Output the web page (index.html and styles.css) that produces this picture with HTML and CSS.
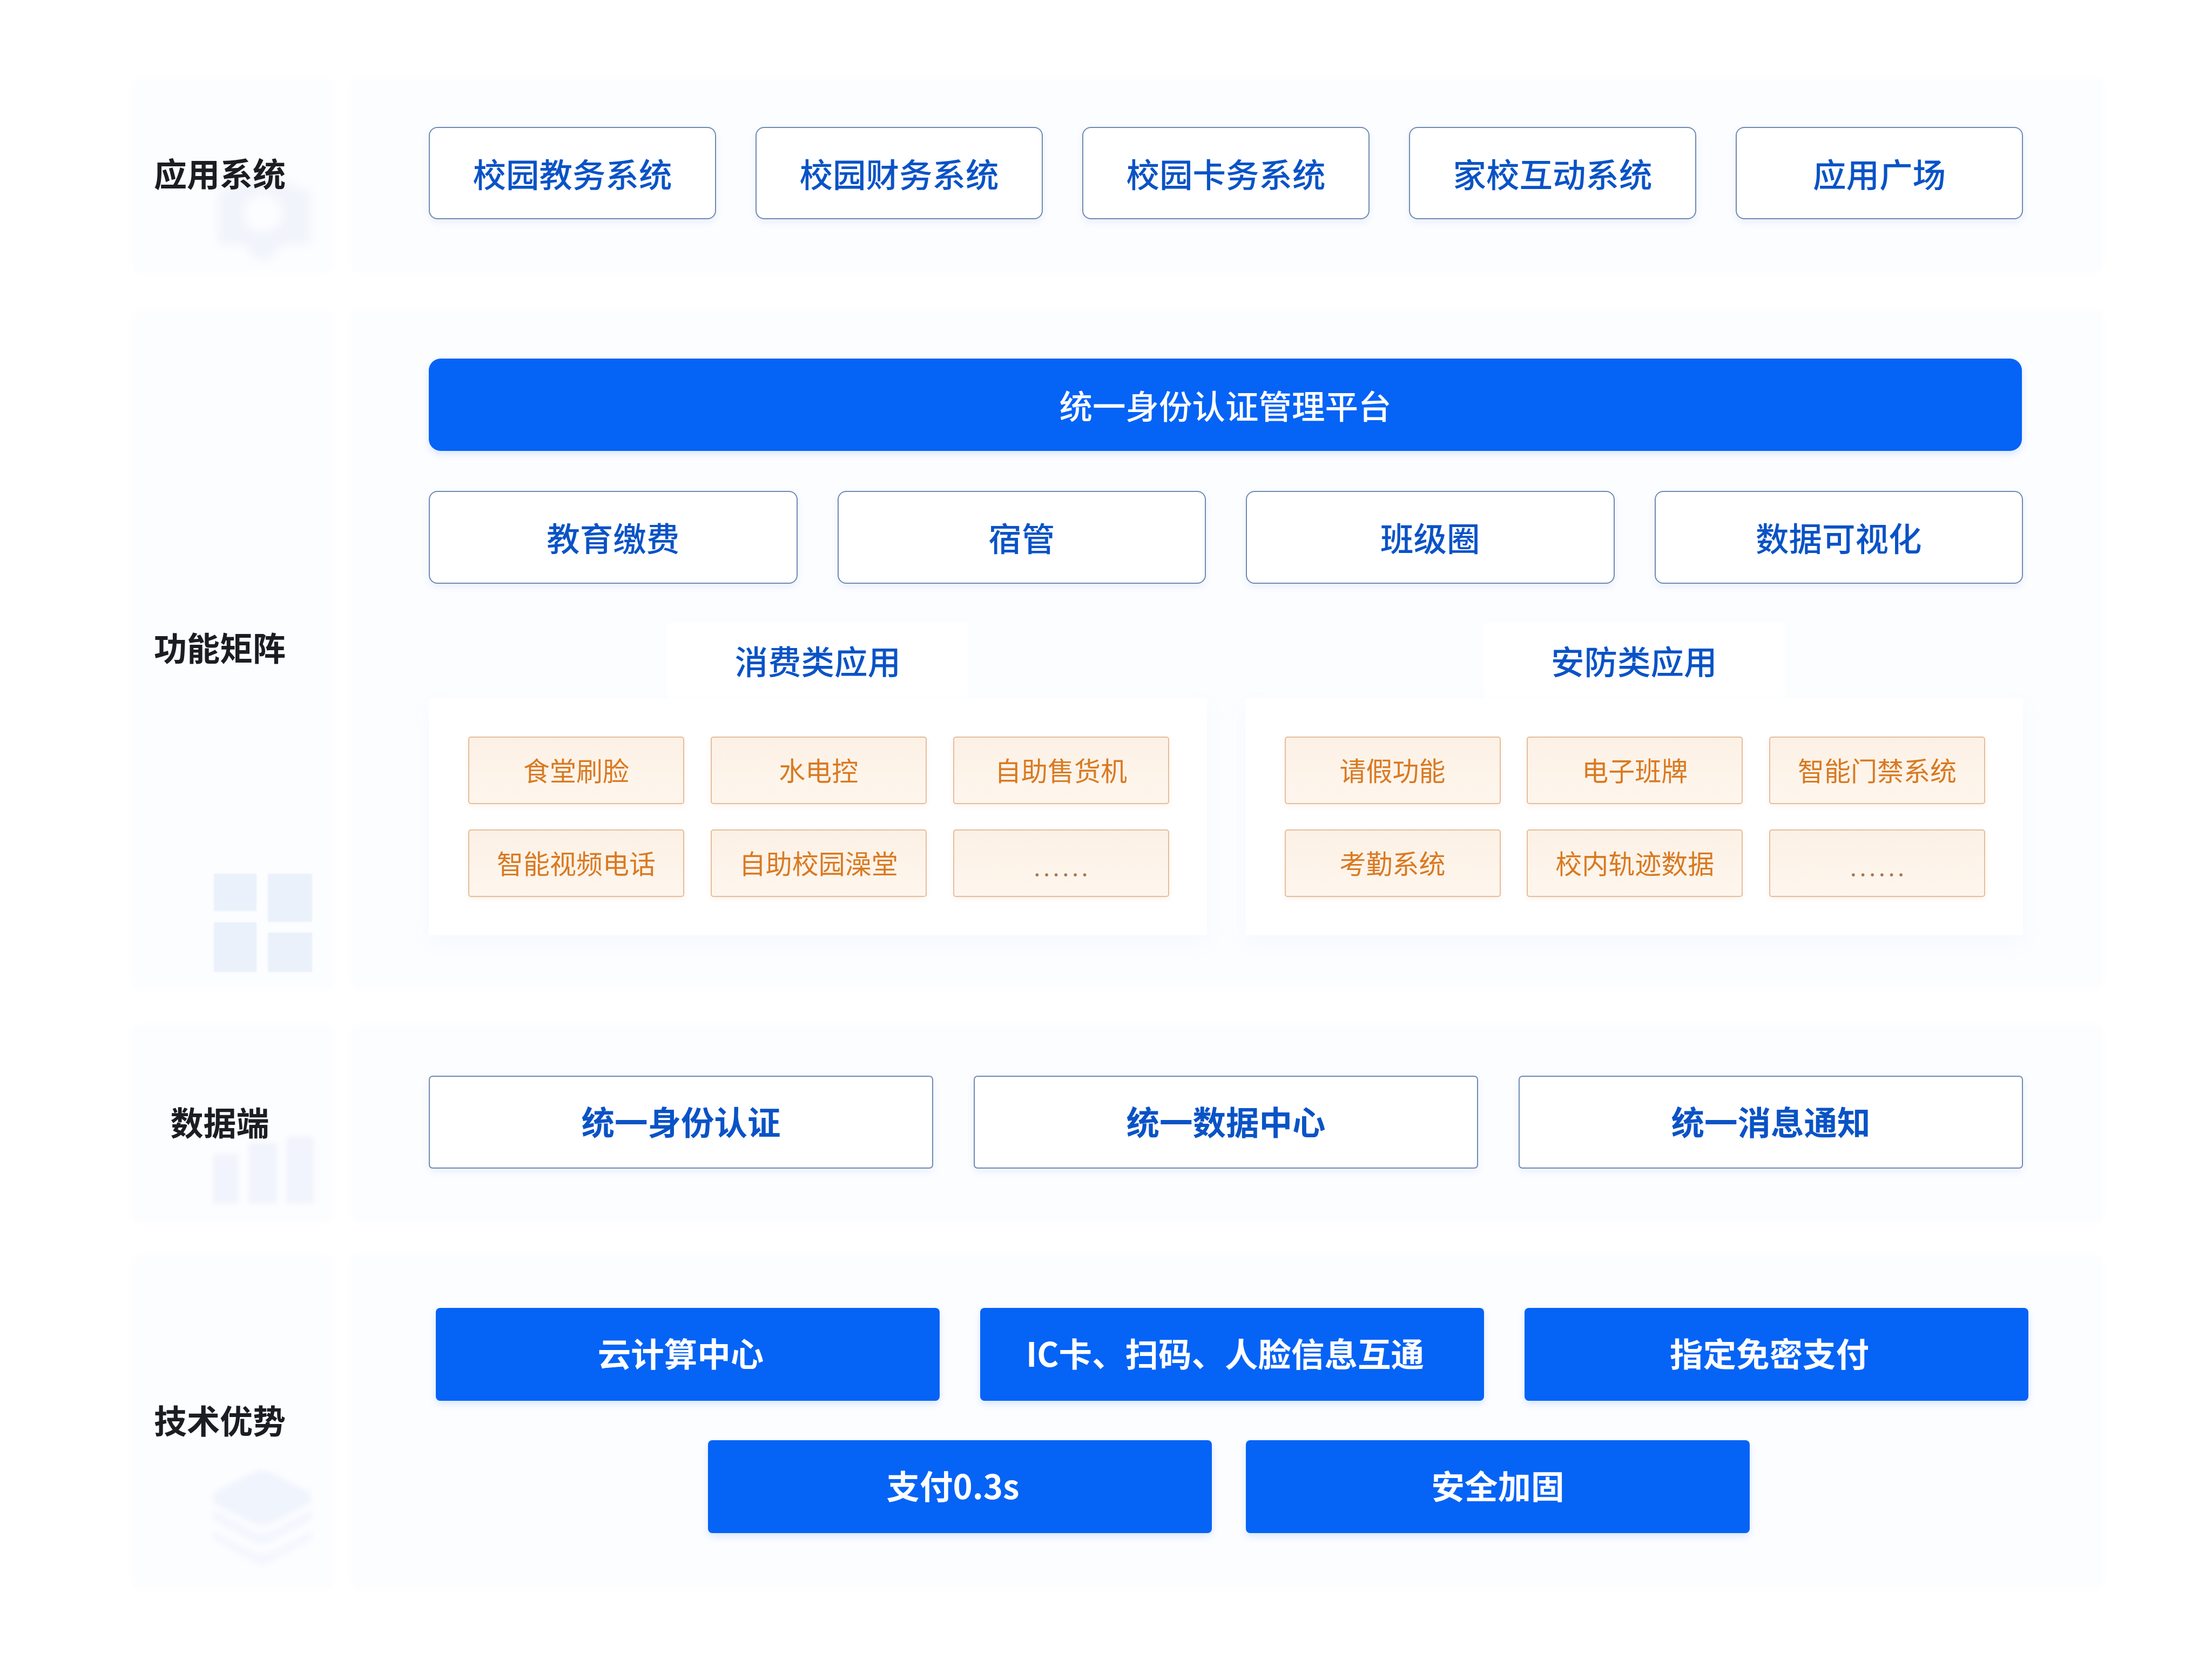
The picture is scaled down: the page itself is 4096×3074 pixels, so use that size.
FILE: index.html
```html
<!DOCTYPE html>
<html lang="zh-CN">
<head>
<meta charset="utf-8">
<title>智慧校园架构</title>
<link rel="stylesheet" href="styles.css">
</head>
<body>
<main class="page">
  <section class="row row-apps">
    <div class="side">
      <h2 class="label">应用系统</h2>
      <svg class="mark mark-gear" viewBox="0 0 175 132"><path fill-rule="evenodd" d="M87 -30 L175 5 V100 L118 105 Q105 132 85 130 Q65 130 58 105 L4 100 V5 Z M87 10 A36 34 0 1 0 87.1 78 A36 34 0 1 0 87 10 Z"/></svg>
    </div>
    <div class="main">
      <div class="grid five">
        <div class="box">校园教务系统</div>
        <div class="box">校园财务系统</div>
        <div class="box">校园卡务系统</div>
        <div class="box">家校互动系统</div>
        <div class="box">应用广场</div>
      </div>
    </div>
  </section>

  <section class="row row-func">
    <div class="side">
      <h2 class="label">功能矩阵</h2>
      <svg class="mark mark-win" viewBox="0 0 182 182"><rect x="0" y="0" width="79" height="69"/><rect x="100" y="0" width="82" height="89"/><rect x="0" y="90" width="79" height="92"/><rect x="100" y="109" width="82" height="73"/></svg>
    </div>
    <div class="main">
      <div class="solid solid-top">统一身份认证管理平台</div>
      <div class="grid four">
        <div class="box box-four">教育缴费</div>
        <div class="box box-four">宿管</div>
        <div class="box box-four">班级圈</div>
        <div class="box box-four">数据可视化</div>
      </div>
      <div class="grid two">
        <div class="group">
          <h3 class="tab">消费类应用</h3>
          <div class="panel">
            <div class="chip">食堂刷脸</div>
            <div class="chip">水电控</div>
            <div class="chip">自助售货机</div>
            <div class="chip">智能视频电话</div>
            <div class="chip">自助校园澡堂</div>
            <div class="chip dots">......</div>
          </div>
        </div>
        <div class="group">
          <h3 class="tab">安防类应用</h3>
          <div class="panel">
            <div class="chip">请假功能</div>
            <div class="chip">电子班牌</div>
            <div class="chip">智能门禁系统</div>
            <div class="chip">考勤系统</div>
            <div class="chip">校内轨迹数据</div>
            <div class="chip dots">......</div>
          </div>
        </div>
      </div>
    </div>
  </section>

  <section class="row row-data">
    <div class="side">
      <h2 class="label">数据端</h2>
      <svg class="mark mark-bars" viewBox="0 0 187 124"><rect x="0" y="32" width="48" height="92"/><rect x="66" y="11" width="53" height="113"/><rect x="136" y="0" width="51" height="124"/></svg>
    </div>
    <div class="main">
      <div class="grid three">
        <div class="box box-data">统一身份认证</div>
        <div class="box box-data">统一数据中心</div>
        <div class="box box-data">统一消息通知</div>
      </div>
    </div>
  </section>

  <section class="row row-tech">
    <div class="side">
      <h2 class="label">技术优势</h2>
      <svg class="mark mark-stack" viewBox="0 0 191 177"><path d="M95 0 Q105 0 120 8 L182 40 Q191 50 182 62 L112 98 Q95 106 78 98 L8 62 Q0 50 8 40 L70 8 Q85 0 95 0 Z"/><path opacity=".75" d="M4 72 L78 112 Q95 120 112 112 L187 72 L187 92 L112 132 Q95 140 78 132 L4 92 Z"/><path opacity=".6" d="M4 112 L78 150 Q95 158 112 150 L187 112 L187 128 L112 170 Q95 180 78 170 L4 128 Z"/></svg>
    </div>
    <div class="main main-tech">
      <div class="grid tech-a">
        <div class="solid solid-shift">云计算中心</div>
        <div class="solid solid-shift">IC卡、扫码、人脸信息互通</div>
        <div class="solid solid-shift">指定免密支付</div>
      </div>
      <div class="grid tech-b">
        <div class="solid solid-shift">支付0.3s</div>
        <div class="solid solid-up">安全加固</div>
      </div>
    </div>
  </section>
</main>
</body>
</html>
```

FILE: styles.css
```css
html, body {
  margin: 0;
  padding: 0;
  background: #ffffff;
}

body {
  width: 4096px;
  height: 3074px;
  overflow: hidden;
  font-family: "Noto Sans CJK SC", "Noto Sans", sans-serif;
}

h2, h3 {
  margin: 0;
  font: inherit;
}

.page {
  display: flex;
  flex-direction: column;
  padding: 147px 204px 0 248px;
}

.row {
  display: grid;
  grid-template-columns: 366px 3239px;
  column-gap: 39px;
}

.row-apps { margin-bottom: 74px; }
.row-func { margin-bottom: 71px; }
.row-data { margin-bottom: 65px; }

.side, .main {
  background: #fcfdff;
  box-shadow: 0 0 36px 10px #fefeff;
}

.side {
  position: relative;
  display: flex;
  align-items: center;
  padding-left: 37px;
  padding-bottom: 10px;
  box-sizing: border-box;
}

.main {
  display: flex;
  flex-direction: column;
  padding: 0 146px 0 141px;
}

.label {
  position: relative;
  z-index: 1;
  width: 244px;
  font-size: 61px;
  line-height: 1;
  font-weight: 700;
  text-align: center;
  white-space: nowrap;
  color: #1b1d22;
}

.mark {
  position: absolute;
  overflow: visible;
}

.mark-gear {
  right: 39px;
  bottom: 19px;
  width: 175px;
  height: 132px;
  fill: #f1f4fb;
  filter: blur(8px);
}

.mark-win {
  right: 36px;
  bottom: 29px;
  width: 182px;
  height: 182px;
  fill: #ebf1fb;
  filter: blur(1px);
}

.mark-bars {
  right: 33px;
  bottom: 33px;
  width: 187px;
  height: 124px;
  fill: #f1f4fc;
  filter: blur(4px);
}

.mark-stack {
  right: 33px;
  bottom: 40px;
  width: 191px;
  height: 177px;
  fill: #f0f4fd;
  filter: blur(5px);
}

.grid {
  display: grid;
}

.five {
  grid-template-columns: repeat(5, 1fr);
  column-gap: 73px;
}

.four {
  grid-template-columns: repeat(4, 1fr);
  column-gap: 74px;
}

.three {
  grid-template-columns: repeat(3, 1fr);
  column-gap: 75px;
}

.two {
  grid-template-columns: repeat(2, 1fr);
  column-gap: 71px;
}

.box, .solid, .chip {
  display: flex;
  align-items: center;
  justify-content: center;
  box-sizing: border-box;
  line-height: 1;
  white-space: nowrap;
}

.box {
  height: 171px;
  background: #ffffff;
  border: 2px solid #6f8ab3;
  border-radius: 16px;
  box-shadow: 0 6px 14px rgba(80, 120, 190, 0.1);
  font-size: 61.5px;
  font-weight: 500;
  color: #0a53c6;
}

.box-four {
  height: 172px;
}

.box-data {
  height: 172px;
  padding-bottom: 4px;
  border-radius: 7px;
  font-weight: 700;
}

.solid {
  height: 172px;
  background: #0563f6;
  border-radius: 8px;
  box-shadow: 0 6px 14px rgba(5, 99, 246, 0.14);
  font-size: 61.5px;
  font-weight: 700;
  color: #ffffff;
}

.solid-shift {
  padding: 0 26px 6px 0;
}

.solid-up {
  padding-bottom: 6px;
}

.solid-top {
  height: 171px;
  width: 2950px;
  border-radius: 22px;
  font-weight: 500;
  margin-bottom: 74px;
}

.group {
  display: flex;
  flex-direction: column;
  align-items: center;
}

.tab {
  box-sizing: border-box;
  width: 558px;
  height: 139px;
  padding-top: 38px;
  background: #ffffff;
  text-align: center;
  font-size: 61.5px;
  font-weight: 500;
  line-height: 1;
  color: #0a53c6;
}

.panel {
  align-self: stretch;
  display: grid;
  grid-template-columns: repeat(3, 400px);
  grid-auto-rows: 125px;
  justify-content: space-between;
  row-gap: 47px;
  padding: 71px 70px 71px 73px;
  background: #ffffff;
  box-shadow: 0 14px 34px rgba(120, 150, 210, 0.05);
}

.chip {
  padding-bottom: 4px;
  background: linear-gradient(180deg, #fcf1e5, #fef6ee);
  border: 2px solid #e6bd9b;
  border-radius: 5px;
  box-shadow: 0 4px 10px rgba(225, 150, 90, 0.12);
  font-size: 49px;
  color: #d97a22;
}

.dots {
  align-items: flex-end;
  padding-left: 6px;
  padding-bottom: 34px;
  font-size: 42px;
  letter-spacing: 6px;
  color: #a9744a;
}

.row-apps .main { padding-top: 88px; padding-bottom: 96px; }

.row-func .main { padding-top: 88px; padding-bottom: 97px; }
.row-func .four { margin-bottom: 73px; }

.row-data .main { padding-top: 92px; padding-bottom: 98px; }

.main-tech {
  padding: 95px 136px 101px 154px;
}

.tech-a {
  grid-template-columns: repeat(3, 933px);
  column-gap: 75px;
  margin-bottom: 73px;
}

.tech-b {
  grid-template-columns: repeat(2, 933px);
  column-gap: 63px;
  padding-left: 504px;
}
```
